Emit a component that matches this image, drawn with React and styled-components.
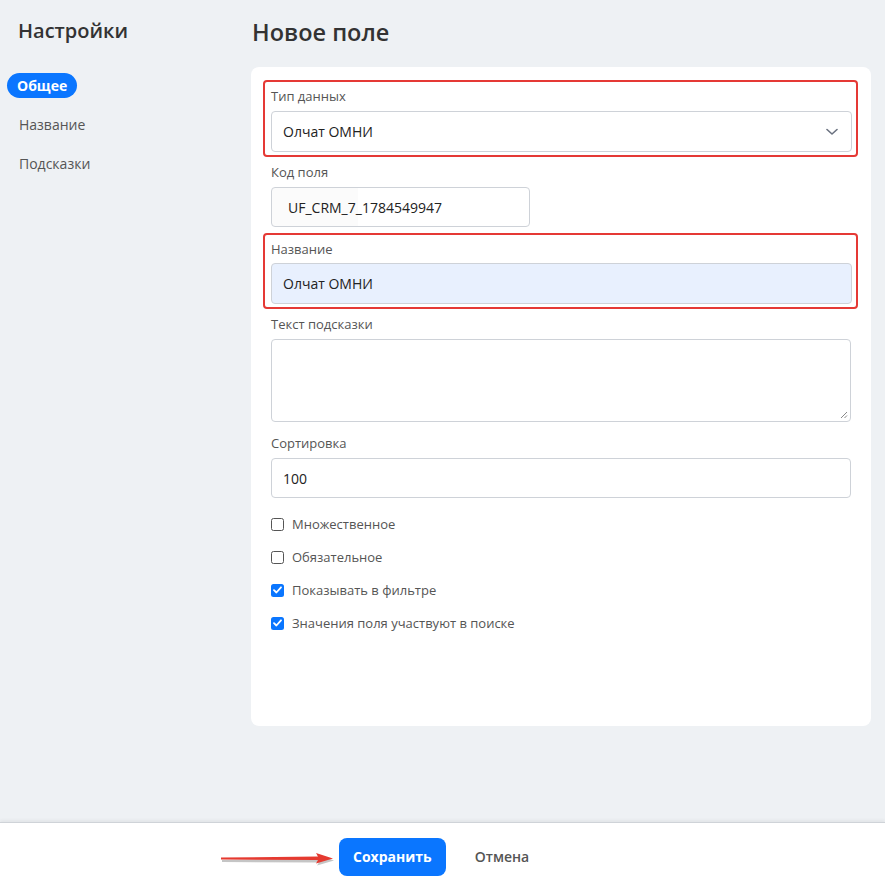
import React from "react";
import styled, { createGlobalStyle } from "styled-components";

const Global = createGlobalStyle`
  html, body { margin: 0; padding: 0; }
  body {
    background: #eef1f4;
    font-family: "Open Sans", "Noto Sans", sans-serif;
    color: #333;
  }
  * { box-sizing: border-box; }
`;

const Page = styled.div`
  width: 885px;
  height: 881px;
  display: flex;
  flex-direction: column;
  background: #eef1f4;
  overflow: hidden;
`;

const Main = styled.div`
  flex: 1;
  display: grid;
  grid-template-columns: 251px 620px;
`;

const Sidebar = styled.aside`
  padding: 16px 0 0 7px;
  display: flex;
  flex-direction: column;
  align-items: flex-start;
`;

const Title = styled.h1`
  margin: 0 0 0 ${(p) => p.$indent || 0}px;
  font-size: ${(p) => p.$size || 22}px;
  font-weight: 600;
  color: #333;
  line-height: 30px;
`;

const NavList = styled.nav`
  margin-top: 27px;
  display: flex;
  flex-direction: column;
  align-items: flex-start;
  gap: 14px;
`;

const NavItem = styled.a`
  font-size: 14px;
  line-height: 25px;
  height: 25px;
  padding: 0 ${(p) => (p.$active ? 10 : 12)}px;
  border-radius: 13px;
  background: ${(p) => (p.$active ? "#0a76ff" : "transparent")};
  color: ${(p) => (p.$active ? "#fff" : "#555")};
  font-weight: ${(p) => (p.$active ? 700 : 400)};
  cursor: pointer;
`;

const Content = styled.section`
  padding-top: 17px;
  display: flex;
  flex-direction: column;
`;

const Card = styled.div`
  margin-top: 20px;
  background: #fff;
  border-radius: 8px;
  height: 659px;
  padding: 13px 13px 0 12px;
  display: flex;
  flex-direction: column;
`;

const Highlight = styled.div`
  border: 2.5px solid #e53935;
  border-radius: 4px;
  padding: 5px 4.5px 3px 6px;
  display: flex;
  flex-direction: column;
`;

const Field = styled.div`
  padding: 0 7px 0 8px;
  display: flex;
  flex-direction: column;
`;

const Label = styled.label`
  font-size: 13px;
  line-height: 18px;
  color: #555;
  margin-bottom: ${(p) => p.$mb ?? 6}px;
  margin-top: ${(p) => p.$mt ?? 0}px;
`;

const Control = styled.div`
  position: relative;
  width: ${(p) => p.$w || "100%"};
  height: ${(p) => p.$h || 41}px;
  border: 1px solid #ced2d8;
  border-radius: 4px;
  background: ${(p) => p.$bg || "#fff"};
  display: flex;
  align-items: center;
  padding-left: ${(p) => p.$pl || 11}px;
  font-size: 14px;
  color: #222;
`;

const Chevron = styled.svg`
  position: absolute;
  right: 13px;
  top: 50%;
  transform: translateY(-50%);
`;

const Grip = styled.svg`
  position: absolute;
  right: 2px;
  bottom: 2px;
`;

const Checks = styled.div`
  margin-top: 16px;
  padding-left: 8px;
  display: flex;
  flex-direction: column;
  gap: 13px;
`;

const CheckRow = styled.label`
  display: flex;
  align-items: center;
  gap: 8px;
  font-size: 13px;
  line-height: 20px;
  color: #555;
`;

const Box = styled.span`
  width: 13px;
  height: 13px;
  border-radius: 2.5px;
  border: ${(p) => (p.$on ? "none" : "1px solid #555")};
  background: ${(p) => (p.$on ? "#0a76ff" : "#fff")};
  display: flex;
  align-items: center;
  justify-content: center;
`;

const Footer = styled.footer`
  height: 59px;
  background: #fff;
  border-top: 1px solid #cfd3d8;
  box-shadow: 0 -2px 3px rgba(0, 0, 0, 0.05);
  display: flex;
  align-items: center;
  padding-left: 220px;
  padding-top: 9px;
`;

const Arrow = styled.svg`
  margin-right: 4px;
  margin-top: 4px;
`;

const PrimaryButton = styled.button`
  height: 38px;
  padding: 0 14px;
  border: none;
  border-radius: 8px;
  background: #0a76ff;
  color: #fff;
  font-family: inherit;
  font-size: 14px;
  font-weight: 700;
`;

const GhostButton = styled.button`
  border: none;
  background: transparent;
  margin-left: 13px;
  padding: 0 16px;
  font-family: inherit;
  font-size: 14px;
  font-weight: 600;
  color: #555;
`;

const Check = ({ on, children }) => (
  <CheckRow>
    <Box $on={on}>
      {on && (
        <svg width="9" height="8" viewBox="0 0 9 8">
          <path d="M1 4.2 L3.4 6.5 L8 1.3" stroke="#fff" strokeWidth="1.8" fill="none" strokeLinecap="round" strokeLinejoin="round" />
        </svg>
      )}
    </Box>
    {children}
  </CheckRow>
);

export default function App() {
  return (
    <Page>
      <Global />
      <Main>
        <Sidebar>
          <Title $indent={11} $size={20}>Настройки</Title>
          <NavList>
            <NavItem $active>Общее</NavItem>
            <NavItem>Название</NavItem>
            <NavItem>Подсказки</NavItem>
          </NavList>
        </Sidebar>
        <Content>
          <Title $indent={1} $size={23.5}>Новое поле</Title>
          <Card>
            <Highlight>
              <Label>Тип данных</Label>
              <Control $h={41}>
                Олчат ОМНИ
                <Chevron width="12" height="8" viewBox="0 0 12 8">
                  <path d="M1 1.5 L6 6 L11 1.5" stroke="#6b7280" strokeWidth="1.6" fill="none" strokeLinecap="round" strokeLinejoin="round" />
                </Chevron>
              </Control>
            </Highlight>
            <Field>
              <Label $mt={6} $mb={6}>Код поля</Label>
              <Control $w="259px" $h={40} $pl={16} $bg="linear-gradient(90deg, #fbfbfb 0 86px, #fff 86px)">
                UF_CRM_7_1784549947
              </Control>
            </Field>
            <Highlight style={{ marginTop: 6 }}>
              <Label $mb={5}>Название</Label>
              <Control $h={41} $bg="#e8f0fe">
                Олчат ОМНИ
              </Control>
            </Highlight>
            <Field>
              <Label $mt={6} $mb={6}>Текст подсказки</Label>
              <Control $h={83}>
                <Grip width="8" height="8" viewBox="0 0 8 8">
                  <path d="M7 1 L1 7 M7 4.5 L4.5 7" stroke="#888" strokeWidth="1" />
                </Grip>
              </Control>
              <Label $mt={12} $mb={6}>Сортировка</Label>
              <Control $h={40}>100</Control>
            </Field>
            <Checks>
              <Check>Множественное</Check>
              <Check>Обязательное</Check>
              <Check on>Показывать в фильтре</Check>
              <Check on>Значения поля участвуют в поиске</Check>
            </Checks>
          </Card>
        </Content>
      </Main>
      <Footer>
        <Arrow width="115" height="14" viewBox="0 0 115 14">
          <path d="M1 6.5 L98 5 L96 1 L113 7 L96 12 L98 9 L1 8.5 Z" fill="#9e9e9e" opacity="0.6" transform="translate(1,1.5)" />
          <path d="M1 5.5 L98 4.5 L96 1 L113 6.5 L96 11.5 L98 8 L1 7.5 Z" fill="#e53a30" />
        </Arrow>
        <PrimaryButton>Сохранить</PrimaryButton>
        <GhostButton>Отмена</GhostButton>
      </Footer>
    </Page>
  );
}
